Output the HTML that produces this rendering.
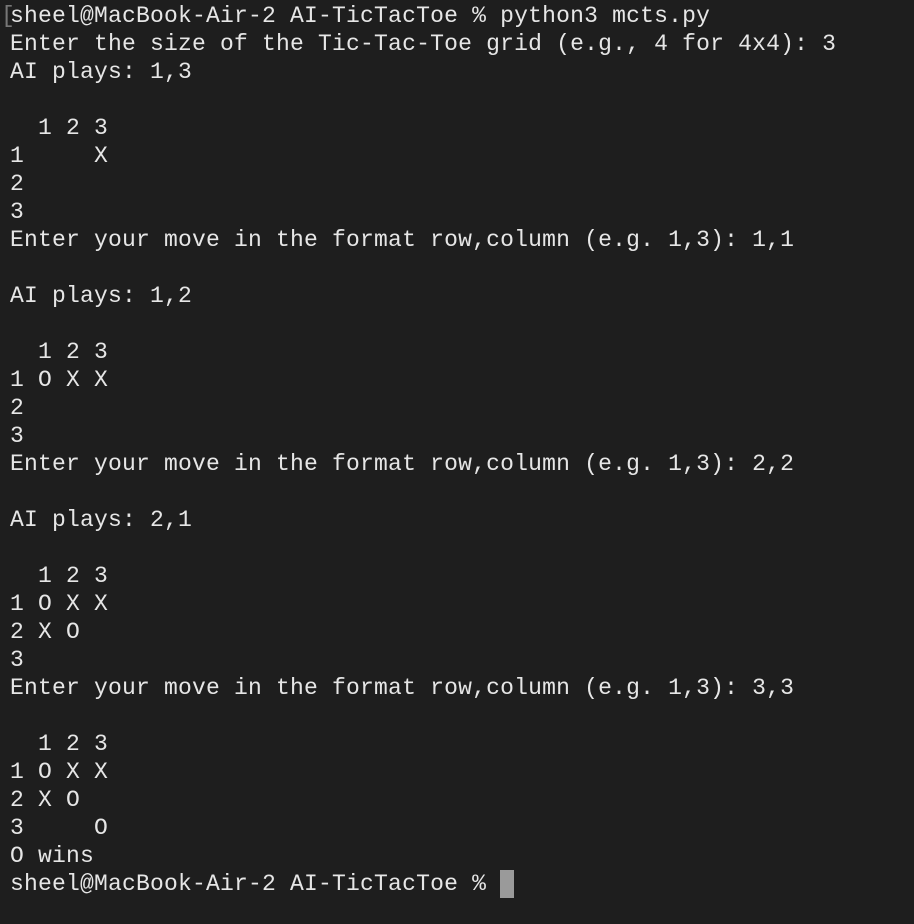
<!DOCTYPE html>
<html><head><style>
html,body{margin:0;padding:0;background:#1e1e1e;width:914px;height:924px;overflow:hidden}
pre{margin:0;position:absolute;left:10px;top:2px;font-family:"Liberation Mono",monospace;font-size:23px;letter-spacing:0.2px;line-height:28px;color:#e6e6e6}
.b{position:absolute;left:1px;top:2px;font-family:"Liberation Mono",monospace;font-size:23px;line-height:28px;color:#777}
.cur{display:inline-block;width:14px;height:28px;background:#9a9a9a;vertical-align:top}
</style></head><body>
<div class="b">[</div>
<pre>sheel@MacBook-Air-2 AI-TicTacToe % python3 mcts.py
Enter the size of the Tic-Tac-Toe grid (e.g., 4 for 4x4): 3
AI plays: 1,3

  1 2 3
1     X
2
3
Enter your move in the format row,column (e.g. 1,3): 1,1

AI plays: 1,2

  1 2 3
1 O X X
2
3
Enter your move in the format row,column (e.g. 1,3): 2,2

AI plays: 2,1

  1 2 3
1 O X X
2 X O
3
Enter your move in the format row,column (e.g. 1,3): 3,3

  1 2 3
1 O X X
2 X O
3     O
O wins
sheel@MacBook-Air-2 AI-TicTacToe % <span class="cur"></span></pre>
</body></html>
